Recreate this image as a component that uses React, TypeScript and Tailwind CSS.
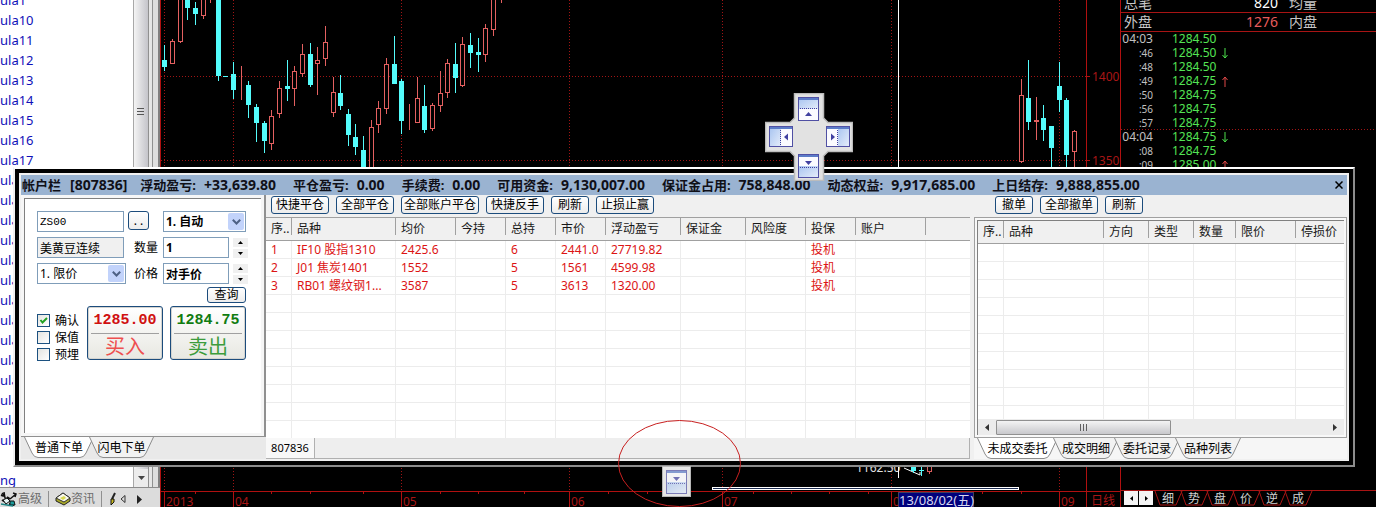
import React from "react";

type Candle = [x: number, high: number, low: number, top: number, bottom: number, kind: "up" | "down"];

const candles: Candle[] = [
  [164, 45, 71, 60, 67, "down"],
  [172, 39, 63, 41, 63, "up"],
  [180, -6, 43, -6, 41, "up"],
  [187, -6, 20, -6, 8, "down"],
  [195, 2, 25, 8, 14, "down"],
  [203, -6, 19, -6, 15, "up"],
  [210, -6, 3, -8, -6, "up"],
  [218, -6, 81, -6, 76, "down"],
  [225, 76, 77, 76, 77, "down"],
  [233, 62, 99, 74, 90, "down"],
  [241, 66, 100, 87, 87, "up"],
  [248, 81, 118, 85, 105, "down"],
  [256, 104, 142, 107, 123, "down"],
  [264, 121, 153, 123, 141, "down"],
  [271, 110, 150, 116, 143, "up"],
  [279, 81, 118, 88, 113, "up"],
  [287, 60, 101, 86, 89, "down"],
  [294, 66, 106, 71, 88, "up"],
  [302, 44, 77, 54, 73, "up"],
  [310, 43, 87, 54, 85, "down"],
  [317, 47, 95, 60, 63, "up"],
  [325, 26, 66, 42, 58, "up"],
  [333, 77, 117, 92, 112, "up"],
  [340, 75, 110, 93, 106, "down"],
  [348, 109, 146, 114, 135, "down"],
  [355, 124, 155, 137, 147, "down"],
  [363, 136, 170, 150, 170, "down"],
  [371, 120, 170, 127, 170, "up"],
  [378, 101, 133, 108, 124, "up"],
  [386, 58, 114, 64, 108, "up"],
  [394, 36, 84, 64, 84, "down"],
  [401, 79, 134, 81, 121, "down"],
  [409, 104, 130, 122, 122, "up"],
  [417, 77, 123, 98, 122, "up"],
  [424, 85, 133, 106, 130, "down"],
  [432, 103, 131, 105, 128, "up"],
  [440, 71, 112, 93, 105, "up"],
  [447, 59, 98, 63, 92, "up"],
  [455, 43, 93, 64, 78, "down"],
  [462, 37, 87, 44, 85, "up"],
  [470, 33, 68, 45, 53, "down"],
  [478, 38, 72, 52, 55, "down"],
  [485, 24, 62, 28, 54, "up"],
  [493, -6, 36, -6, 29, "up"],
  [501, -6, 3, -8, -6, "up"],
  [1021, 79, 163, 95, 161, "up"],
  [1028, 60, 130, 98, 122, "down"],
  [1036, 97, 140, 120, 121, "up"],
  [1043, 105, 141, 118, 130, "down"],
  [1051, 126, 170, 126, 148, "down"],
  [1059, 62, 112, 86, 100, "down"],
  [1066, 98, 170, 100, 155, "down"],
  [1074, 130, 170, 131, 151, "up"],
];

const months: [number, string][] = [
  [164, "2013"],
  [233, "04"],
  [401, "05"],
  [569, "06"],
  [722, "07"],
  [891, "0"],
  [1059, "09"],
];
const minorTicks = [195, 271, 310, 363, 440, 478, 524, 608, 647, 684, 753, 791, 829, 868, 982, 1021];

function Chart() {
  return (
    <svg
      className="block h-full w-full font-['Noto_Sans','Noto_Sans_CJK_SC',sans-serif]"
      viewBox="160 0 961 507"
      preserveAspectRatio="xMinYMin slice"
      shapeRendering="crispEdges"
      role="img"
      aria-label="日线"
    >
      <g stroke="#a01414" strokeDasharray="1 2">
        <path d="M161 76.5H1086M161 160.5H1086" />
        {months.map(([x]) => (
          <path key={x} d={`M${x + 0.5} 0V491`} />
        ))}
      </g>
      <path d="M898.5 0V170" stroke="#fff" />
      {candles.map(([x, high, low, top, bottom, kind]) =>
        kind === "down" ? (
          <g key={x} fill="#54fcfc">
            <rect x={x} y={high} width={1} height={low - high} />
            <rect x={x - 2} y={top} width={5} height={bottom - top} />
          </g>
        ) : (
          <g key={x} stroke="#e46060" fill="#000">
            <path d={`M${x + 0.5} ${high}V${low}`} />
            <rect x={x - 1.5} y={top + 0.5} width={4} height={bottom - top} />
          </g>
        ),
      )}
      <g stroke="#b01010" fill="none">
        <path d="M160.5 0V507" />
        <path d="M1086.5 0V507M1120.5 0V507M161 491.5H1120M1086 76.5h4M1086 160.5h4" />
        {months.map(([x]) => (
          <path key={x} d={`M${x + 0.5} 491V507`} />
        ))}
        {minorTicks.map((x) => (
          <path key={x} d={`M${x + 0.5} 491v3`} />
        ))}
      </g>
      <g fill="#a81616" fontSize="12">
        {months.map(([x, label]) => (
          <text key={x} x={x + 2} y={506}>
            {label}
          </text>
        ))}
        <text x="1092" y="81">1400</text>
        <text x="1092" y="165">1350</text>
        <text x="1091" y="505">日线</text>
      </g>
      <text x="856" y="472" fill="#e0e0e0" fontSize="12">1162.50</text>
      <path d="M904 468L920 475V472" stroke="#fff" fill="none" shapeRendering="auto" />
      <path d="M898.5 466V478" stroke="#fff" />
      <g fill="#54fcfc">
        <rect x="911" y="467" width="5" height="4" />
        <rect x="913" y="466" width="1" height="7" />
        <rect x="921" y="466" width="1" height="10" />
        <rect x="919" y="470" width="5" height="1" />
      </g>
      <path d="M927.5 466.5h4v5h-4zM929.5 471v3" stroke="#dc5c5c" fill="none" />
      <rect x="712.5" y="487.5" width="306" height="2" fill="#1c2c50" stroke="#fff" />
      <rect x="898" y="492" width="76" height="15" fill="#00007c" />
      <path d="M898.5 507V492.5H973.5V507" stroke="#40405c" fill="none" />
      <text x="899" y="505" fill="#d8d8f0" fontSize="13">13/08/02(五)</text>
    </svg>
  );
}

const formulas = ["1", "10", "11", "12", "13", "14", "15", "16", "17", "18", "19", "20", "21", "22", "23", "24", "25", "26", "27", "28", "29", "30", "31"];

function Sidebar() {
  return (
    <aside className="flex w-[160px] shrink-0 flex-col bg-[#ececec]">
      <div className="flex min-h-0 flex-1">
        <div className="flex min-w-0 flex-1 overflow-hidden bg-white">
          <ul className="-mt-[10px] text-[13px] leading-[20px] text-[#1010b8]">
            {formulas.map((n) => (
              <li key={n}>ula{n}</li>
            ))}
            <li className="h-[20px]" />
            <li>ng</li>
          </ul>
        </div>
        <div className="flex w-[15px] flex-col items-center justify-between border-l border-[#a8a8a8] bg-gradient-to-r from-[#f4f4f4] to-[#c4c4ca]">
          <svg className="mt-[107px] h-[9px] w-[8px]" viewBox="0 0 8 9" shapeRendering="crispEdges">
            <path d="M0 1.5h7M0 4.5h7M0 7.5h7" stroke="#555" />
          </svg>
          <button type="button" aria-label="向下滚动" className="flex h-[18px] w-full items-center justify-center bg-[#ececec]">
            <svg className="h-[4px] w-[7px]" viewBox="0 0 7 4">
              <path d="M0 0h7L3.500 4z" fill="#444" />
            </svg>
          </button>
        </div>
        <div className="w-[5px] border-x border-[#909090] bg-[#e6e6e6]" />
        <div className="w-[7px] border-r-2 border-[#808080] bg-[#dedede]" />
      </div>
      <div className="flex h-[20px] items-end border-t border-[#8c8c8c] bg-[#dcdcdc] text-[12px] leading-[16px] text-[#6c6c6c]">
        <button type="button" className="flex items-end">
          <svg className="h-[16px] w-[18px]" viewBox="0 0 18 16">
            <path d="M2 2l3 3M4 1l1 6 4 2M10 8l6-5M13 2l3 1-1 3" stroke="#111" strokeWidth="1.500" fill="none" />
            <path d="M1 4l3 1M7 6l3 2M2 9l5 3M9 13l5 1" stroke="#111" strokeWidth="2" fill="none" />
            <path d="M3 9l4-2 3 3-4 3z" fill="#e4f4f4" stroke="#111" />
            <path d="M10 10h4l1 4h-5z" fill="#1c9c9c" stroke="#111" />
            <path d="M1 13l12 2" stroke="#1c8484" strokeWidth="1.500" />
          </svg>
          高级
        </button>
        <span className="mx-[6px] h-[16px] w-px bg-[#909090]" />
        <button type="button" className="flex items-end">
          <svg className="h-[16px] w-[16px]" viewBox="0 0 16 16">
            <path d="M1 7l7-5 7 5v3l-6 4-8-4z" fill="#a8a828" stroke="#222" />
            <path d="M1 7l7-5 7 5-6 4z" fill="#f8f8ec" stroke="#333" />
            <path d="M5 7l4-2 2 2-3 2z" fill="#d8d850" />
          </svg>
          资讯
        </button>
        <span className="mr-[7px] ml-[6px] h-[16px] w-px bg-[#909090]" />
        <svg className="h-[16px] w-[8px]" viewBox="0 0 8 16">
          <path d="M6 2L3 8" stroke="#222" strokeWidth="2" />
          <path d="M2 8h3v3l-3 3z" fill="#c8b820" stroke="#111" />
        </svg>
        <button type="button" aria-label="上一页" className="flex h-[16px] w-[12px] items-center justify-center">
          <svg className="h-[8px] w-[6px]" viewBox="0 0 6 8">
            <path d="M5 .5v7L1 4z" fill="none" stroke="#333" />
          </svg>
        </button>
        <button type="button" aria-label="下一页" className="flex h-[16px] w-[20px] items-center justify-center">
          <svg className="h-[9px] w-[5px]" viewBox="0 0 5 9">
            <path d="M0 0v9l5-4.500z" fill="#222" />
          </svg>
        </button>
      </div>
    </aside>
  );
}

const ticks: [string, string, "" | "up" | "down"][] = [
  ["04:03", "1284.50", ""],
  [":46", "1284.50", "down"],
  [":48", "1284.50", ""],
  [":49", "1284.75", "up"],
  [":50", "1284.75", ""],
  [":56", "1284.75", ""],
  [":57", "1284.75", ""],
  ["04:04", "1284.75", "down"],
  [":08", "1284.75", ""],
  [":09", "1285.00", "up"],
];

function Arrow({ up }: { up: boolean }) {
  return (
    <svg className="h-[11px] w-[6px]" viewBox="0 0 6 11">
      {up ? (
        <path d="M3 11V1M.5 4L3 1l2.500 3" stroke="#e04848" fill="none" />
      ) : (
        <path d="M3 0v10M.5 7L3 10l2.500-3" stroke="#4ce04c" fill="none" />
      )}
    </svg>
  );
}

function Quotes() {
  return (
    <aside className="flex w-[255px] shrink-0 flex-col justify-between bg-black">
      <div>
        <div className="flex h-[13px] items-end border-b border-[#a81414] pl-[3px] text-[14px] leading-[18px] text-[#c8c8c8]">
          <span className="w-[94px]">总笔</span>
          <span className="w-[60px] text-right text-white">820</span>
          <span className="pl-[11px]">均量</span>
        </div>
        <div className="flex h-[19px] items-end border-b border-[#a81414] pl-[3px] text-[14px] leading-[18px] text-[#c8c8c8]">
          <span className="w-[94px]">外盘</span>
          <span className="w-[60px] text-right text-[#e85c5c]">1276</span>
          <span className="pl-[11px]">内盘</span>
        </div>
        <ul className="text-[12px] leading-[14px]">
          {ticks.map(([time, price, dir], i) => (
            <li
              key={i}
              className={
                i === 6
                  ? "flex h-[14px] items-center bg-[repeating-linear-gradient(90deg,#a01414_0_1px,transparent_1px_3px)] bg-[length:100%_1px] bg-bottom bg-no-repeat"
                  : "flex h-[14px] items-center"
              }
            >
              <span className={time.length > 3 ? "w-[32px] text-right text-[#c0c0c0]" : "w-[32px] text-right text-[10px] text-[#c0c0c0]"}>{time}</span>
              <span className="w-[69px] pl-[19px] text-[#54e454]">{price}</span>
              {dir !== "" && <Arrow up={dir === "up"} />}
            </li>
          ))}
        </ul>
      </div>
      <div className="flex h-[17px] items-start border-t border-[#a81414] pl-[3px]">
        <button type="button" aria-label="向左" className="flex h-[14px] w-[14px] items-center justify-center bg-[#f4f4f4]">
          <svg className="h-[5px] w-[3px]" viewBox="0 0 3 5"><path d="M3 0v5L0 2.500z" fill="#000" /></svg>
        </button>
        <button type="button" aria-label="向右" className="mr-[2px] ml-px flex h-[14px] w-[14px] items-center justify-center bg-[#f4f4f4]">
          <svg className="h-[5px] w-[3px]" viewBox="0 0 3 5"><path d="M0 0v5l3-2.500z" fill="#000" /></svg>
        </button>
        {["细", "势", "盘", "价", "逆", "成"].map((t) => (
          <button key={t} type="button" className="relative h-[15px] w-[26px] text-[12px] leading-[15px] text-[#d0d0d0]">
            <svg className="absolute inset-0 h-full w-full overflow-visible" viewBox="0 0 26 15">
              <path d="M0 0l5 14h16l6-14" fill="none" stroke="#a81414" />
            </svg>
            {t}
          </button>
        ))}
      </div>
    </aside>
  );
}

const summary: [string, string][] = [
  ["浮动盈亏:", "+33,639.80"],
  ["平仓盈亏:", "0.00"],
  ["手续费:", "0.00"],
  ["可用资金:", "9,130,007.00"],
  ["保证金占用:", "758,848.00"],
  ["动态权益:", "9,917,685.00"],
  ["上日结存:", "9,888,855.00"],
];

function TitleBar() {
  return (
    <header className="flex h-[20px] shrink-0 items-center bg-[#9ab3d1] pl-px text-[13px] leading-[20px] font-bold whitespace-nowrap text-[#101018]">
      <span>帐户栏</span>
      <span className="mr-[13px] ml-[9px] text-[14px]">[807836]</span>
      <dl className="flex gap-[17px]">
        {summary.map(([label, value]) => (
          <div key={label} className="flex gap-2">
            <dt>{label}</dt>
            <dd className="text-[14px]">{value}</dd>
          </div>
        ))}
      </dl>
      <button type="button" aria-label="关闭" className="mr-[4px] ml-auto flex h-[14px] w-[9px] items-center justify-center">
        <svg className="h-[8px] w-[8px]" viewBox="0 0 8 8">
          <path d="M.5.5l7 7M7.500.5l-7 7" stroke="#000" strokeWidth="1.500" />
        </svg>
      </button>
    </header>
  );
}

const toolWidths: Record<number, string> = { 2: "w-[38px]", 4: "w-[58px]", 6: "w-[78px]" };

function ToolButton({ label }: { label: string }) {
  return (
    <button
      type="button"
      className={`${toolWidths[label.length]} h-[18px] rounded-[3px] border border-[#1c4c7c] bg-gradient-to-b from-white to-[#ececec] text-center text-[12px] leading-[16px] whitespace-nowrap text-black`}
    >
      {label}
    </button>
  );
}

function SheetTab({ width, active, children }: { width: number; active?: boolean; children: React.ReactNode }) {
  return (
    <button
      type="button"
      className="relative -ml-[5px] h-[21px] shrink-0 text-[12px] leading-[21px] whitespace-nowrap text-black"
      style={{ width }}
    >
      <svg className="absolute inset-0 h-full w-full" viewBox={`0 0 ${width} 21`}>
        <path
          d={`M.5 0L8 16Q10 20.500 14 20.500H${width - 14}Q${width - 10} 20.500 ${width - 8} 16L${width - 0.5} 0`}
          fill={active ? "#fff" : "#f2f2f2"}
          stroke="#8c8c8c"
        />
      </svg>
      <span className="relative">{children}</span>
    </button>
  );
}

const inputBox = "h-[21px] border border-[#7f9db9] px-[2px] text-[12px] leading-[19px] text-black";

function Chevron() {
  return (
    <span className="pointer-events-none absolute top-[2px] right-[2px] flex h-[17px] w-[16px] items-center justify-center rounded-[2px] bg-[#c2d3fb]">
      <svg className="h-[6px] w-[9px]" viewBox="0 0 9 6">
        <path d="M.8.8L4.500 4.500 8.200.8" fill="none" stroke="#4d6185" strokeWidth="2" />
      </svg>
    </span>
  );
}

function Spinner({ label }: { label: string }) {
  return (
    <span className="flex h-[20px] w-[15px] flex-col gap-[2px]">
      <button type="button" aria-label={`${label}加`} className="flex flex-1 items-center justify-center bg-[#f0f0f0]">
        <svg className="h-[3px] w-[5px]" viewBox="0 0 5 3"><path d="M0 3h5L2.500 0z" fill="#000" /></svg>
      </button>
      <button type="button" aria-label={`${label}减`} className="flex flex-1 items-center justify-center bg-[#f0f0f0]">
        <svg className="h-[3px] w-[5px]" viewBox="0 0 5 3"><path d="M0 0h5L2.500 3z" fill="#000" /></svg>
      </button>
    </span>
  );
}

function Check({ label, checked }: { label: string; checked?: boolean }) {
  return (
    <label className="flex h-[17px] items-center gap-[5px] text-[12px] leading-[17px] text-black">
      <span className="relative flex h-[13px] w-[13px]">
        <input
          type="checkbox"
          defaultChecked={checked}
          className="peer h-[13px] w-[13px] appearance-none border border-[#1c5180] bg-gradient-to-br from-[#e4e4e0] to-white"
        />
        <svg className="pointer-events-none absolute inset-0 hidden h-[13px] w-[13px] peer-checked:block" viewBox="0 0 13 13">
          <path d="M3.500 6l2 2.500L10 4" fill="none" stroke="#21a121" strokeWidth="2" />
        </svg>
      </span>
      {label}
    </label>
  );
}

function TradeButton({ price, action, buy }: { price: string; action: string; buy?: boolean }) {
  return (
    <button
      type="button"
      className="flex h-[54px] w-[76px] flex-col items-center rounded-[3px] border border-[#1c4c7c] bg-gradient-to-b from-white to-[#e8e8e2] px-[3px] shadow-[inset_0_0_0_1px_#d4d4d0]"
    >
      <span
        className={
          buy
            ? "w-full border-b border-[#a0a0a0] pt-[2px] font-['Liberation_Mono',monospace] text-[15px] leading-[24px] font-bold text-[#d01010]"
            : "w-full border-b border-[#a0a0a0] pt-[2px] font-['Liberation_Mono',monospace] text-[15px] leading-[24px] font-bold text-[#107c10]"
        }
      >
        {price}
      </span>
      <span className={buy ? "text-[20px] leading-[26px] text-[#ee5050]" : "text-[20px] leading-[26px] text-[#3c9c3c]"}>{action}</span>
    </button>
  );
}

function OrderPanel() {
  return (
    <section className="flex w-[245px] shrink-0 flex-col">
      <div className="flex min-h-0 flex-1 border-r-2 border-b border-[#909090] bg-[#f6f6f6] p-[3px]">
        <form className="flex-1 border-t border-l border-[#808080] bg-white pt-[12px] pl-[12px]" onSubmit={(e) => e.preventDefault()}>
          <div className="flex">
            <input aria-label="合约" defaultValue="ZS00" className="h-[21px] w-[87px] border border-[#7f9db9] px-[2px] font-['Liberation_Mono',monospace] text-[11px] leading-[19px] text-black" />
            <button
              type="button"
              aria-label="选择合约"
              className="mr-[14px] ml-[4px] h-[19px] w-[21px] rounded-[3px] border border-[#1c4c7c] bg-gradient-to-b from-white to-[#ececec] text-[12px] leading-[17px]"
            >
              . .
            </button>
            <span className="relative flex">
              <select aria-label="交易所" className={`${inputBox} w-[83px] appearance-none bg-white font-bold`}>
                <option>1. 自动</option>
              </select>
              <Chevron />
            </span>
          </div>
          <div className="mt-[5px] flex items-center">
            <input aria-label="合约名称" readOnly defaultValue="美黄豆连续" className={`${inputBox} w-[87px] bg-[#f0f0f0]`} />
            <label htmlFor="qty" className="ml-[10px] w-[29px] text-[12px] leading-[20px]">数量</label>
            <input id="qty" defaultValue="1" className={`${inputBox} w-[66px] font-bold`} />
            <span className="ml-[4px] flex"><Spinner label="数量" /></span>
          </div>
          <div className="mt-[5px] flex items-center">
            <span className="relative flex">
              <select aria-label="价格类型" className={`${inputBox} w-[89px] appearance-none bg-white`}>
                <option>1. 限价</option>
              </select>
              <Chevron />
            </span>
            <label htmlFor="price" className="ml-[8px] w-[29px] text-[12px] leading-[20px]">价格</label>
            <input id="price" defaultValue="对手价" className={`${inputBox} w-[66px] font-bold`} />
            <span className="ml-[4px] flex"><Spinner label="价格" /></span>
          </div>
          <div className="mt-[3px] flex justify-end pr-[15px]">
            <button
              type="button"
              className="h-[16px] w-[39px] rounded-[3px] border border-[#1c4c7c] bg-gradient-to-b from-white to-[#ececec] text-[12px] leading-[14px]"
            >
              查询
            </button>
          </div>
          <div className="mt-[3px] flex">
            <div className="w-[50px] pt-[6px]">
              <Check label="确认" checked />
              <Check label="保值" />
              <Check label="预埋" />
            </div>
            <div className="flex gap-[7px]">
              <TradeButton price="1285.00" action="买入" buy />
              <TradeButton price="1284.75" action="卖出" />
            </div>
          </div>
        </form>
      </div>
      <div className="flex h-[22px] shrink-0 bg-[#e9e9e9] pl-[8px]">
        <SheetTab width={70} active>普通下单</SheetTab>
        <SheetTab width={65}>闪电下单</SheetTab>
      </div>
    </section>
  );
}

function Grid({ widths, heads, rows, count }: { widths: number[]; heads: string[]; rows: string[][]; count: number }) {
  return (
    <table className="w-full table-fixed border-separate border-spacing-0 text-[12px]">
      <colgroup>
        {widths.map((w, i) => (
          <col key={i} style={{ width: w }} />
        ))}
        {heads.length > widths.length && <col />}
      </colgroup>
      <thead>
        <tr>
          {heads.map((h, i) => (
            <th
              key={i}
              className="h-[23px] border-b border-[#a0a0a0] bg-gradient-to-r from-transparent from-[calc(100%-1px)] to-[#a0a0a0] to-[calc(100%-1px)] bg-[length:100%_17px] bg-top bg-no-repeat p-0 pl-[5px] text-left leading-[18px] font-normal whitespace-nowrap text-[#181818] last:bg-none"
            >
              {h}
            </th>
          ))}
        </tr>
      </thead>
      <tbody>
        {Array.from({ length: count }, (_, r) => (
          <tr key={r}>
            {heads.map((_, c) => (
              <td
                key={c}
                className="h-[18px] overflow-hidden border-r border-b border-[#ececec] bg-white p-0 pl-[5px] leading-[17px] whitespace-nowrap text-[#dc1414] last:border-r-0"
              >
                {rows[r]?.[c] ?? ""}
              </td>
            ))}
          </tr>
        ))}
      </tbody>
    </table>
  );
}

const positions = [
  ["1", "IF10 股指1310", "2425.6", "", "6", "2441.0", "27719.82", "", "", "投机"],
  ["2", "J01 焦炭1401", "1552", "", "5", "1561", "4599.98", "", "", "投机"],
  ["3", "RB01 螺纹钢1...", "3587", "", "5", "3613", "1320.00", "", "", "投机"],
];

function Positions() {
  return (
    <section className="flex min-w-0 flex-1 flex-col">
      <div className="flex h-[22px] shrink-0 items-start gap-[7px] pt-px pl-[5px]">
        {["快捷平仓", "全部平仓", "全部账户平仓", "快捷反手", "刷新", "止损止赢"].map((t) => (
          <ToolButton key={t} label={t} />
        ))}
      </div>
      <div className="min-h-0 flex-1 overflow-hidden border-t border-[#a0a0a0] bg-[#f0f0f0]">
        <Grid
          widths={[26, 104, 60, 50, 50, 50, 75, 65, 60, 50, 70]}
          heads={["序..", "品种", "均价", "今持", "总持", "市价", "浮动盈亏", "保证金", "风险度", "投保", "账户", ""]}
          rows={positions}
          count={11}
        />
      </div>
      <div className="flex h-[21px] shrink-0 border-r border-b border-[#b0b0b0] bg-[#eeeeee]">
        <button type="button" className="w-[49px] border-r border-[#b0b0b0] bg-[#f8f8f8] text-[11px] leading-[20px] text-black">807836</button>
      </div>
    </section>
  );
}

function Orders() {
  return (
    <section className="flex w-[373px] shrink-0 flex-col">
      <div className="flex h-[22px] shrink-0 items-start gap-[7px] pt-px pl-[21px]">
        {["撤单", "全部撤单", "刷新"].map((t) => (
          <ToolButton key={t} label={t} />
        ))}
      </div>
      <div className="flex min-h-0 flex-1 flex-col border border-[#a0a0a0] bg-[#f8f8f8] p-[2px]">
        <div className="flex min-h-0 flex-1 flex-col border-t border-l border-[#808080] bg-[#f0f0f0]">
          <div className="min-h-0 flex-1 overflow-hidden">
            <Grid
              widths={[26, 100, 45, 45, 42, 60]}
              heads={["序..", "品种", "方向", "类型", "数量", "限价", "停损价"]}
              rows={[]}
              count={10}
            />
          </div>
          <div className="flex h-[16px] shrink-0 items-center bg-[#ececec]">
            <button type="button" aria-label="向左滚动" className="flex h-full w-[18px] items-center justify-center">
              <svg className="h-[7px] w-[4px]" viewBox="0 0 4 7"><path d="M4 0v7L0 3.500z" fill="#333" /></svg>
            </button>
            <div className="flex h-[15px] w-[175px] items-center justify-center rounded-[1px] border border-[#909090] bg-gradient-to-b from-[#f4f4f4] to-[#c8c8cc]">
              <svg className="h-[7px] w-[9px]" viewBox="0 0 9 7" shapeRendering="crispEdges">
                <path d="M1.500 0v7M4.500 0v7M7.500 0v7" stroke="#606060" />
              </svg>
            </div>
            <button type="button" aria-label="向右滚动" className="ml-auto flex h-full w-[18px] items-center justify-center">
              <svg className="h-[7px] w-[4px]" viewBox="0 0 4 7"><path d="M0 0v7l4-3.500z" fill="#333" /></svg>
            </button>
          </div>
        </div>
      </div>
      <div className="flex h-[21px] shrink-0 bg-[#f6f6f6] pl-[8px]">
        <SheetTab width={81} active>未成交委托</SheetTab>
        <SheetTab width={66}>成交明细</SheetTab>
        <SheetTab width={66}>委托记录</SheetTab>
        <SheetTab width={66}>品种列表</SheetTab>
      </div>
    </section>
  );
}

function DockGlyph({ transform, side }: { transform: string; side: "up" | "down" | "left" | "right" }) {
  const fill = { up: [1, 1, 19, 11], down: [1, 12, 19, 11], left: [1, 1, 11, 19], right: [12, 1, 11, 19] }[side];
  const vertical = side === "up" || side === "down";
  const w = vertical ? 21 : 24;
  const h = vertical ? 24 : 21;
  const line = vertical ? (side === "up" ? "M2 11.500H19" : "M2 13.500H19") : "M11.500 4V19";
  const head = {
    up: "M7 19h7l-3.500-4z",
    down: "M7 7h7l-3.500 4z",
    left: "M19 7.500v7l-4-3.500z",
    right: "M5 7.500v7l4-3.500z",
  }[side];
  return (
    <g transform={transform}>
      <rect x=".5" y=".5" width={w - 1} height={h - 1} fill="#fbfbff" />
      <rect x={fill[0]} y={fill[1]} width={fill[2]} height={fill[3]} fill="url(#dockShade)" />
      <rect x="1" y="1" width={w - 2} height="2" fill="#5c7cc8" />
      <path d={line} stroke="#4040a0" strokeDasharray="1 1" />
      <path d={head} fill="#4040a0" />
      <rect x=".5" y=".5" width={w - 1} height={h - 1} fill="none" stroke="#5050a4" />
    </g>
  );
}

function DockGuides() {
  return (
    <>
      <svg className="absolute top-[93px] left-[765px] h-[88px] w-[88px]" viewBox="0 0 88 88" role="img" aria-label="停靠">
        <defs>
          <linearGradient id="dockShade" x1="0" y1="0" x2="1" y2="1">
            <stop offset="0" stopColor="#a8c4f0" />
            <stop offset="1" stopColor="#e4ecfa" />
          </linearGradient>
        </defs>
        <path
          d="M29.500.5h29V25L63 29.500H87.500v29H63L58.500 63V87.500h-29V63L25 58.500H.5v-29H25L29.500 25z"
          fill="#e2e2e2"
          stroke="#bcbcbc"
          strokeWidth="1.500"
        />
        <DockGlyph transform="translate(33 4)" side="up" />
        <DockGlyph transform="translate(4 33)" side="left" />
        <DockGlyph transform="translate(61 33)" side="right" />
        <DockGlyph transform="translate(33 61)" side="down" />
      </svg>
      <svg className="absolute bottom-[10px] left-[662px] h-[31px] w-[29px]" viewBox="0 0 29 31" role="img" aria-label="停靠底部">
        <rect x=".5" y=".5" width="28" height="30" fill="#e6e6e6" stroke="#b8b8b8" />
        <g opacity=".7">
          <DockGlyph transform="translate(4 4)" side="down" />
        </g>
      </svg>
      <svg className="pointer-events-none absolute bottom-0 left-[618px] h-[87px] w-[123px]" viewBox="0 0 123 87" aria-hidden="true">
        <ellipse cx="61.500" cy="43.500" rx="61" ry="43" fill="none" stroke="#c82020" />
      </svg>
    </>
  );
}

export default function App() {
  return (
    <main className="relative flex h-screen w-full overflow-hidden bg-black font-['Noto_Sans','Noto_Sans_CJK_SC',sans-serif]">
      <Sidebar />
      <div className="min-w-0 flex-1">
        <Chart />
      </div>
      <Quotes />
      <div className="absolute top-[167px] right-[21px] bottom-[40px] left-[13px] border-2 border-t-white border-r-[#8c8c8c] border-b-[#8c8c8c] border-l-[#f0f0f0]">
        <div className="flex h-full flex-col border-4 border-black bg-[#f0f0f0] p-[2px]">
          <TitleBar />
          <div className="flex min-h-0 flex-1">
            <OrderPanel />
            <Positions />
            <div className="w-[4px] shrink-0" />
            <Orders />
          </div>
        </div>
      </div>
      <DockGuides />
    </main>
  );
}
